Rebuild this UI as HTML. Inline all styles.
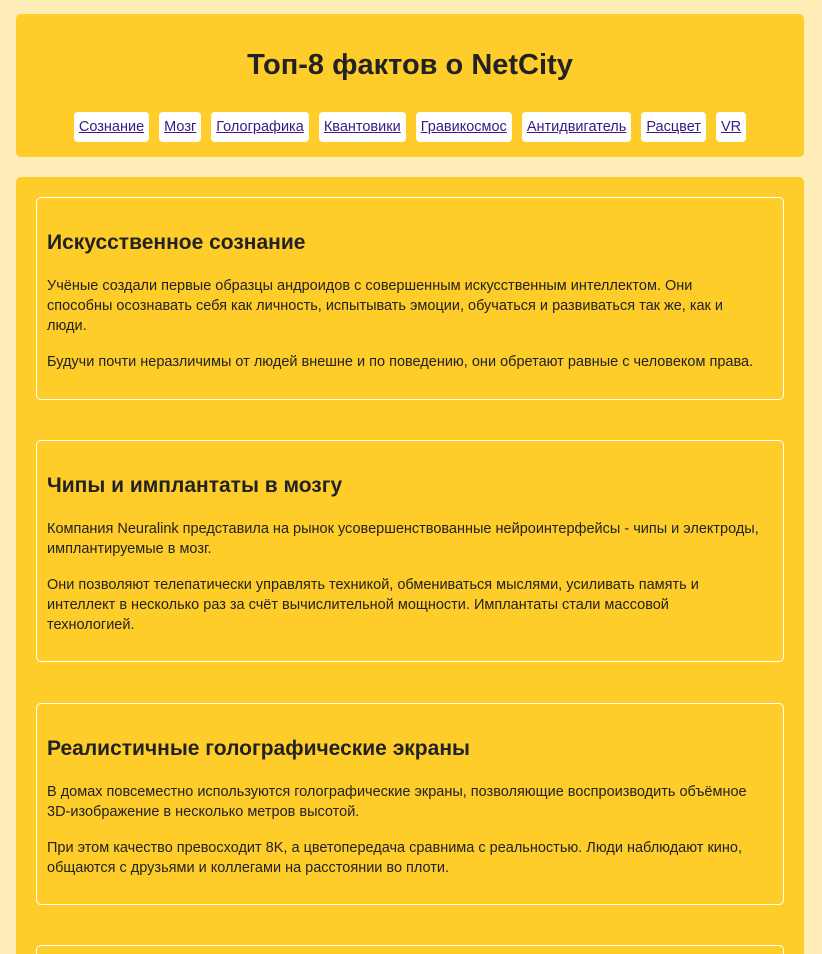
<!DOCTYPE html>
<html style="overflow:hidden;height:954px"><head><meta charset="utf-8"><style>
body{margin:0;background:#ffedb8;font-family:"Liberation Sans","DejaVu Sans",sans-serif;color:#222;width:822px;height:954px;overflow:hidden;position:relative}
.hdr{position:absolute;left:16px;top:14px;width:788px;height:143px;background:#ffcd2a;border-radius:5px;text-align:center}
.hdr h1{margin:0;position:absolute;top:33px;left:0;right:0;font-size:29px;line-height:36px;font-weight:bold;color:#222}
nav{position:absolute;top:98px;left:0;right:0;text-align:center;font-size:14.5px;line-height:30px;height:30px}
nav a{display:inline-block;vertical-align:top;background:#fff;border-radius:4px;padding:0 5px;height:30px;line-height:30px;margin:0 3px;color:#3a1a86;text-decoration:underline}
.main{position:absolute;left:16px;top:177px;width:788px;height:777px;background:#ffcd2a;border-radius:5px 5px 0 0;overflow:hidden}
.card{position:absolute;left:20px;width:726px;border:1px solid #fff;border-radius:5px;padding:0 10px;box-sizing:content-box}
.card h2{margin:30px 0 0;font-size:21px;line-height:30px;font-weight:bold;color:#222}
.card p{margin:18px 0 0;font-size:14.5px;line-height:20px;color:#222;padding-right:12px}
.card p+p{margin-top:16px}
</style></head><body>
<div class="hdr"><h1>Топ-8 фактов о NetCity</h1>
<nav><a>Сознание</a> <a>Мозг</a> <a>Голографика</a> <a>Квантовики</a> <a>Гравикосмос</a> <a>Антидвигатель</a> <a>Расцвет</a> <a>VR</a></nav></div>
<div class="main">
<div class="card" style="top:20px;height:201px"><h2>Искусственное сознание</h2>
<p>Учёные создали первые образцы андроидов с совершенным искусственным интеллектом. Они способны осознавать себя как личность, испытывать эмоции, обучаться и развиваться так же, как и люди.</p>
<p>Будучи почти неразличимы от людей внешне и по поведению, они обретают равные с человеком права.</p></div>
<div class="card" style="top:263px;height:220px"><h2>Чипы и имплантаты в мозгу</h2>
<p>Компания Neuralink представила на рынок усовершенствованные нейроинтерфейсы - чипы и электроды, имплантируемые в мозг.</p>
<p>Они позволяют телепатически управлять техникой, обмениваться мыслями, усиливать память и интеллект в несколько раз за счёт вычислительной мощности. Имплантаты стали массовой<br>технологией.</p></div>
<div class="card" style="top:526px;height:200px"><h2>Реалистичные голографические экраны</h2>
<p>В домах повсеместно используются голографические экраны, позволяющие воспроизводить объёмное 3D-изображение в несколько метров высотой.</p>
<p>При этом качество превосходит 8K, а цветопередача сравнима с реальностью. Люди наблюдают кино, общаются с друзьями и коллегами на расстоянии во плоти.</p></div>
<div class="card" style="top:768px;height:100px"></div>
</div>
</body></html>
